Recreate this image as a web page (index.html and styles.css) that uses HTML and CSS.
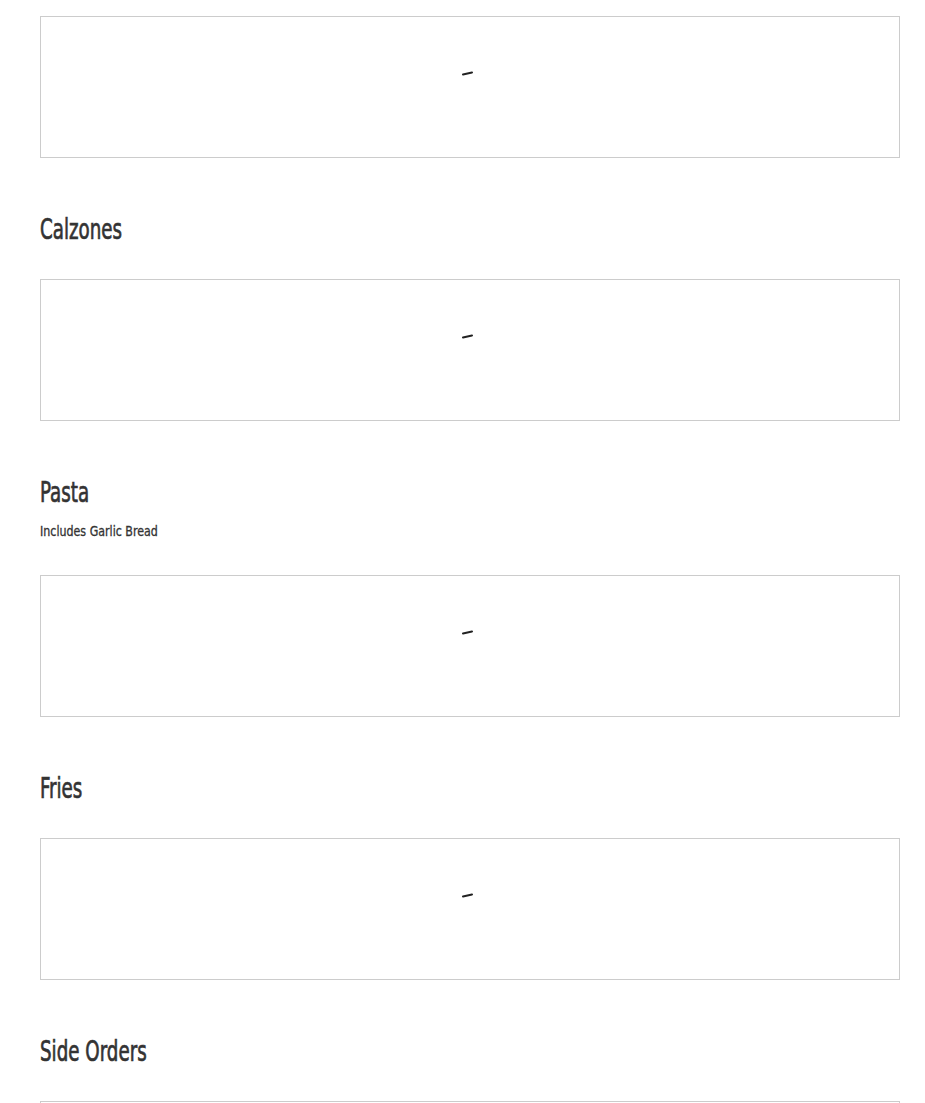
FILE: index.html
```html
<!DOCTYPE html>
<html lang="en">

<head>
    <meta charset="UTF-8">
    <meta name="viewport" content="width=device-width, initial-scale=1.0">
    <title>Menu</title>
    <link rel="stylesheet" href="styles.css">
</head>

<body>
    <div class="menu">
        <div class="items-box">
            <span class="loader"><svg width="12" height="6" viewBox="0 0 12 6"><path d="M1 4.5 L10 2.5" stroke="#222" stroke-width="2" stroke-linecap="round" fill="none"/></svg></span>
        </div>

        <div class="category">
            <h2 class="category-title"><span>Calzones</span></h2>
            <div class="items-box">
                <span class="loader"><svg width="12" height="6" viewBox="0 0 12 6"><path d="M1 4.5 L10 2.5" stroke="#222" stroke-width="2" stroke-linecap="round" fill="none"/></svg></span>
            </div>
        </div>

        <div class="category">
            <h2 class="category-title"><span>Pasta</span></h2>
            <div class="category-note"><span>Includes Garlic Bread</span></div>
            <div class="items-box">
                <span class="loader"><svg width="12" height="6" viewBox="0 0 12 6"><path d="M1 4.5 L10 2.5" stroke="#222" stroke-width="2" stroke-linecap="round" fill="none"/></svg></span>
            </div>
        </div>

        <div class="category">
            <h2 class="category-title"><span>Fries</span></h2>
            <div class="items-box">
                <span class="loader"><svg width="12" height="6" viewBox="0 0 12 6"><path d="M1 4.5 L10 2.5" stroke="#222" stroke-width="2" stroke-linecap="round" fill="none"/></svg></span>
            </div>
        </div>

        <div class="category">
            <h2 class="category-title"><span>Side Orders</span></h2>
            <div class="items-box">
                <span class="loader"><svg width="12" height="6" viewBox="0 0 12 6"><path d="M1 4.5 L10 2.5" stroke="#222" stroke-width="2" stroke-linecap="round" fill="none"/></svg></span>
            </div>
        </div>
    </div>
</body>

</html>
```

FILE: styles.css
```css
body,
html {
    margin: 0;
    padding: 0;
    background-color: #fff;
    font-family: "DejaVu Sans Condensed", "DejaVu Sans", sans-serif;
    color: #333;
}

.menu {
    width: 860px;
    margin-left: 40px;
    padding-top: 16px;
}

.items-box {
    box-sizing: border-box;
    height: 142px;
    border: 1px solid #ccc;
    display: flex;
    justify-content: center;
    padding-top: 44px;
}

.loader {
    display: block;
    height: 6px;
    margin-left: -5px;
}

.category {
    padding-top: 53px;
}

.category-title {
    margin: 0 0 32px;
    font-size: 29px;
    line-height: 36px;
    font-weight: normal;
}

/* the menu font is a tall condensed face, so squeeze the fallback */
.category-title span,
.category-note span {
    display: inline-block;
    transform: scaleX(0.7);
    transform-origin: left center;
    white-space: nowrap;
    -webkit-text-stroke: 0.7px #333;
}

.category-note {
    margin: -21px 0 34px;
    font-size: 14px;
    line-height: 20px;
    font-weight: normal;
}

.category-note span {
    transform: scaleX(0.88);
    -webkit-text-stroke: 0.3px #333;
}
```
